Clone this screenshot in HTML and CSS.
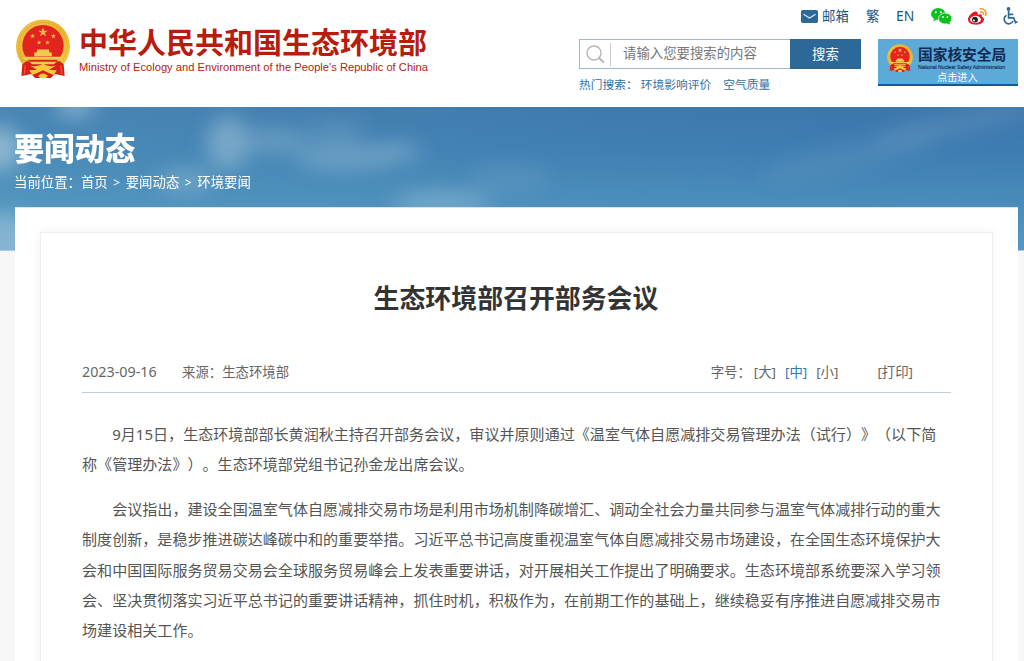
FILE: index.html
```html
<!DOCTYPE html>
<html lang="zh-CN">
<head>
<meta charset="utf-8">
<title>生态环境部召开部务会议</title>
<link rel="stylesheet" href="styles.css">
</head>
<body>
<svg width="0" height="0" class="defs">
<defs>
<linearGradient id="gold" x1="0" y1="0" x2="1" y2="1"><stop offset="0" stop-color="#f0c64c"/><stop offset=".5" stop-color="#e8b32f"/><stop offset="1" stop-color="#f7d24b"/></linearGradient>
<path id="star" d="M0-5 1.2-1.6 4.8-1.6 1.9.6 3 4 0 1.9-3 4-1.9.6-4.8-1.6-1.2-1.6Z"/>
<symbol id="emblem" viewBox="0 0 56 60">
<ellipse cx="28" cy="28" rx="27.5" ry="27.5" fill="url(#gold)"/>
<ellipse cx="28" cy="28" rx="24.5" ry="24.5" fill="none" stroke="#dfa42b" stroke-width=".8" stroke-dasharray="3 1"/>
<circle cx="28" cy="27" r="21" fill="#e3231d"/>
<g fill="#e9bd48"><use href="#star" transform="translate(28 13.5)"/><use href="#star" transform="translate(17.500 17.500) scale(.55)"/><use href="#star" transform="translate(38.500 17.500) scale(.55)"/><use href="#star" transform="translate(24 24) scale(.5)"/><use href="#star" transform="translate(32.5 24) scale(.5)"/></g>
<path d="M22 31H34L34.500 34H37V38H19V34H21.500ZM8 38.500H48V41.500H8Z" fill="#f1cb4d"/>
<path d="M11 43H45L49 46 50 58 40 56 36 60H20L16 56 6 58 7 46Z" fill="#d91e18"/>
<path d="M14 43.500H42L39 46H17Z" fill="#f1cb4d"/>
<path d="M10 47 9 56M46 47 47 56" stroke="#f05a3a" stroke-width="1.200"/>
<path d="M15 47.500Q23 49 28 45.500 33 49 41 47.500L34 51.500 42 52 39 57Q33 54.500 28 52 23 54.500 17 57L14 52 22 51.500ZM23 58Q28 53 33 58L31 60H25Z" fill="#f3cb3b"/>
</symbol>
</defs>
</svg>
<header class="header">
<div class="brand">
<svg class="brand-emblem"><use href="#emblem"/></svg>
<div class="brand-text">
<div class="brand-cn">中华人民共和国生态环境部</div>
<svg class="brand-en" width="352" height="18"><text x="0" y="13" textLength="349" lengthAdjust="spacingAndGlyphs">Ministry of Ecology and Environment of the People's Republic of China</text></svg>
</div>
</div>
<div class="tools">
<nav class="quick">
<a class="mail"><svg width="17" height="13" viewBox="0 0 17 13"><rect width="17" height="13" rx="1.8" fill="#2c6998"/><path d="M2.5 4.2 8.5 8 14.5 4.2" fill="none" stroke="#d5e7f2" stroke-width="1.3"/></svg><span>邮箱</span></a>
<a class="trad">繁</a>
<a class="en">EN</a>
<svg class="wechat" width="21" height="18" viewBox="0 0 21 18"><ellipse cx="7.200" cy="5.900" rx="7.200" ry="5.900" fill="#0ac11e"/><path d="M3 10 2.300 13.200 6 11.500Z" fill="#0ac11e"/><ellipse cx="14.200" cy="10.500" rx="6.700" ry="5.500" fill="#0ac11e" stroke="#fff" stroke-width=".7"/><path d="M15.500 15 18.800 16.800 18.500 13.500Z" fill="#0ac11e"/><g fill="#fff"><circle cx="4.800" cy="4.200" r="1"/><circle cx="9.800" cy="4.200" r="1"/><circle cx="12" cy="9" r=".9"/><circle cx="16.400" cy="9" r=".9"/></g></svg>
<svg class="weibo" width="19" height="17" viewBox="0 0 19 17"><path d="M7 3.500C3.500 4.500 0 8.500 0 11.500 0 15 4 16.700 8 16.700c5 0 8-2.700 8-5.200 0-1.500-1-2.300-2.200-2.700.7-2-.5-3.300-4-2C10.200 4.500 9 3 7 3.500Z" fill="#e6161e"/><ellipse cx="7.500" cy="11.500" rx="5.400" ry="3.700" fill="#fff"/><circle cx="7" cy="11.700" r="2.900" fill="#222"/><circle cx="6" cy="12.600" r="1" fill="#fff"/><path d="M11.500 1C16 0 19 3.500 17.500 8M12 4c2.500-.5 4 1 3.500 3" fill="none" stroke="#f39a2d" stroke-width="1.600"/></svg>
<svg class="access" width="16" height="18" viewBox="0 0 16 18"><circle cx="6.500" cy="2" r="1.900" fill="#2c6998"/><path d="M6.600 4V10.800H11.700L13.500 15.600 15.500 14.800M6.600 7.300H11.300M4.500 8.200A4.600 4.600 0 1 0 11 14" fill="none" stroke="#2c6998" stroke-width="1.700"/></svg>
</nav>
<div class="tool-row">
<div class="search-area">
<div class="search">
<svg class="glass" width="19" height="19" viewBox="0 0 19 19"><circle cx="8" cy="8" r="7" fill="none" stroke="#b5b5b5" stroke-width="1.400"/><path d="M13 13 18 17.500" stroke="#b5b5b5" stroke-width="1.800"/></svg>
<span class="prompt">请输入您要搜索的内容</span>
<button>搜索</button>
</div>
<div class="hot"><span>热门搜索：</span><a>环境影响评价</a><a>空气质量</a></div>
</div>
<a class="nnsa">
<svg class="nnsa-emblem"><use href="#emblem"/></svg>
<span class="nnsa-text"><b>国家核安全局</b><svg width="90" height="9"><text x="0" y="6.500" textLength="87" lengthAdjust="spacingAndGlyphs">National Nuclear Safety Administration</text></svg><i>点击进入</i></span>
</a>
</div>
</div>
</header>
<section class="banner">
<svg class="sky" viewBox="0 0 1024 144" preserveAspectRatio="none">
<defs><linearGradient id="sky" x2="0" y2="1"><stop offset="0" stop-color="#3b75ab"/><stop offset=".3" stop-color="#3d7cb1"/><stop offset=".7" stop-color="#4a8dbb"/><stop offset="1" stop-color="#5598c4"/></linearGradient><linearGradient id="haze"><stop offset="0" stop-color="#68acc8" stop-opacity=".3"/><stop offset=".6" stop-color="#68acc8" stop-opacity=".08"/><stop offset="1" stop-color="#68acc8" stop-opacity="0"/></linearGradient><filter id="soft" filterUnits="userSpaceOnUse" x="-80" y="-80" width="1200" height="320"><feGaussianBlur stdDeviation="10"/></filter></defs>
<rect width="1024" height="144" fill="url(#sky)"/>
<rect width="1024" height="144" fill="url(#haze)"/>
<g filter="url(#soft)" fill="#a8c9dc">
<ellipse cx="75" cy="0" rx="20" ry="8" opacity=".8"/><ellipse cx="0" cy="42" rx="22" ry="22" opacity=".7"/><ellipse cx="0" cy="145" rx="50" ry="38" opacity=".55"/>
<ellipse cx="228" cy="36" rx="21" ry="27" opacity=".5"/><ellipse cx="275" cy="34" rx="32" ry="12" opacity=".35"/><ellipse cx="345" cy="50" rx="50" ry="13" opacity=".4"/><ellipse cx="400" cy="45" rx="22" ry="9" opacity=".4"/><ellipse cx="335" cy="24" rx="30" ry="10" opacity=".22"/><ellipse cx="185" cy="74" rx="28" ry="11" opacity=".4"/><ellipse cx="442" cy="98" rx="50" ry="14" opacity=".4"/><ellipse cx="510" cy="72" rx="40" ry="15" opacity=".14"/><ellipse cx="960" cy="16" rx="90" ry="11" opacity=".18" transform="rotate(-12 960 16)"/><ellipse cx="850" cy="50" rx="90" ry="14" opacity=".12" transform="rotate(-12 850 50)"/></g>
</svg>
<div class="banner-text"><h2>要闻动态</h2>
<div class="crumbs"><span>当前位置：</span><a>首页</a><em>&gt;</em><a>要闻动态</a><em>&gt;</em><a>环境要闻</a></div></div>
</section>
<main class="panel">
<article class="card">
<h1>生态环境部召开部务会议</h1>
<div class="meta"><span class="date">2023-09-16</span><span>来源：生态环境部</span><span class="size">字号：</span><a>[大]</a><a class="active">[中]</a><a>[小]</a><a class="print">[打印]</a></div>
<div class="body">
<p>9月15日，生态环境部部长黄润秋主持召开部务会议，审议并原则通过《温室气体自愿减排交易管理办法（试行）》（以下简<br>称《管理办法》）。生态环境部党组书记孙金龙出席会议。</p>
<p>会议指出，建设全国温室气体自愿减排交易市场是利用市场机制降碳增汇、调动全社会力量共同参与温室气体减排行动的重大<br>制度创新，是稳步推进碳达峰碳中和的重要举措。习近平总书记高度重视温室气体自愿减排交易市场建设，在全国生态环境保护大<br>会和中国国际服务贸易交易会全球服务贸易峰会上发表重要讲话，对开展相关工作提出了明确要求。生态环境部系统要深入学习领<br>会、坚决贯彻落实习近平总书记的重要讲话精神，抓住时机，积极作为，在前期工作的基础上，继续稳妥有序推进自愿减排交易市<br>场建设相关工作。</p>
</div>
</article>
</main>
</body>
</html>
```
FILE: styles.css
```css
* { box-sizing: border-box; }
body { margin: 0; height: 661px; overflow: hidden; background: #f7f7f7; font-family: "Noto Sans", "Noto Sans CJK SC", sans-serif; font-size: 13.4px; color: #666; text-spacing-trim: space-all; font-kerning: none; }
.defs { position: absolute; }
svg { display: block; flex: none; }
.header { height: 107px; background: #fff; display: flex; justify-content: space-between; padding: 0 6px 0 15px; }
.brand { display: flex; padding-top: 19px; }
.brand-emblem { width: 56px; height: 59px; }
.brand-text { margin-left: 8px; padding-top: 6px; color: #b71c0c; white-space: nowrap; }
.brand-cn { font-size: 29px; line-height: 36px; height: 33px; font-weight: 700; }
.brand-en { font: 11.2px "Liberation Sans", Arial, sans-serif; fill: #b71c0c; }
.tools { width: 439px; color: #1d5580; }
.quick { height: 39px; padding: 6px 0 0 222px; display: flex; align-items: flex-start; line-height: 20px; font-size: 13.4px; white-space: nowrap; margin-right: -6px; }
.mail { display: flex; gap: 4px; width: 65px; }
.mail svg { margin-top: 4px; }
.trad { width: 30px; }
.en { width: 36px; font-size: 13.9px; }
.wechat { margin: 2px 16px 0 -1px; }
.weibo { margin: 2px 15px 0 0; }
.access { margin-top: 1px; }
.tool-row { display: flex; justify-content: space-between; }
.search-area { width: 282px; }
.search { height: 30px; display: flex; align-items: center; border: 1px solid #9bb8d0; border-right: 0; }
.glass { margin-left: 6px; }
.prompt { flex: 1; margin-left: 5px; border-left: 1px solid #ccc; padding-left: 12px; height: 23px; line-height: 21px; color: #777; }
.search button { width: 71px; height: 30px; margin: -1px 0; padding: 0 0 2px; border: 0; color: #fff; background: #2c6998; font: inherit; }
.hot { display: flex; font-size: 11.75px; line-height: 18px; margin-top: 6px; color: #36709f; }
.hot a { margin-right: 12px; }
.hot span { margin-right: 3px; }
.nnsa { width: 140px; height: 47px; display: flex; background: #5da9d7; border-bottom: 2px solid #0e5c98; padding-left: 9px; }
.nnsa-emblem { width: 26px; height: 28px; margin-top: 5px; }
.nnsa-text { display: flex; flex-direction: column; margin-left: 5px; width: 92px; white-space: nowrap; }
.nnsa b { font-size: 14.7px; line-height: 18px; height: 23px; padding-top: 6px; color: #112b55; }
.nnsa-text svg { font: 6px "Liberation Sans", Arial, sans-serif; fill: #112b55; stroke: #112b55; stroke-width: .15px; overflow: visible; }
.nnsa i { font-style: normal; font-size: 10.2px; line-height: 12px; color: #fff; padding-left: 19px; }
.banner { height: 144px; display: grid; color: #fff; border-bottom: 1px solid #a8c9df; }
.sky, .banner-text { grid-area: 1 / 1; width: 100%; }
.sky { height: 143px; overflow: hidden; }
.banner-text { padding: 21px 0 0 14px; z-index: 1; }
.banner h2 { margin: 0; font-size: 30.3px; line-height: 42px; height: 41px; font-weight: 900; }
.crumbs { display: flex; line-height: 22px; font-size: 13.4px; margin-top: 2px; }
.crumbs em { font-style: normal; width: 18px; text-align: center; font-size: 12px; padding-top: 1px; }
.panel { position: relative; z-index: 2; margin: -44px 6px 0 15px; height: 454px; background: #fff; border-top: 1px solid #d4e5ef; padding: 24px 25px 0; }
.card { height: 450px; border: 1px solid #eee; box-shadow: 0 0 10px rgba(0,0,0,.06); padding: 0 41px; }
.card h1 { margin: 45px 0 0 -1px; font-size: 25.9px; line-height: 40px; text-align: center; color: #333; }
.meta { height: 41px; margin-top: 34px; border-bottom: 1px solid #bfcddd; display: flex; line-height: 40px; color: #666; white-space: nowrap; }
.date { width: 100px; font-size: 14.3px; }
.size { margin-left: auto; margin-right: 3px; }
.meta a { margin-right: 9px; }
.meta .active { color: #2c7bb5; }
.meta .print { margin: 0 38px 0 30px; }
.body { padding-top: 26px; font-size: 15.07px; line-height: 30.12px; color: #555; }
.body p { margin: 0 0 15px; text-indent: 2em; white-space: nowrap; }
```
